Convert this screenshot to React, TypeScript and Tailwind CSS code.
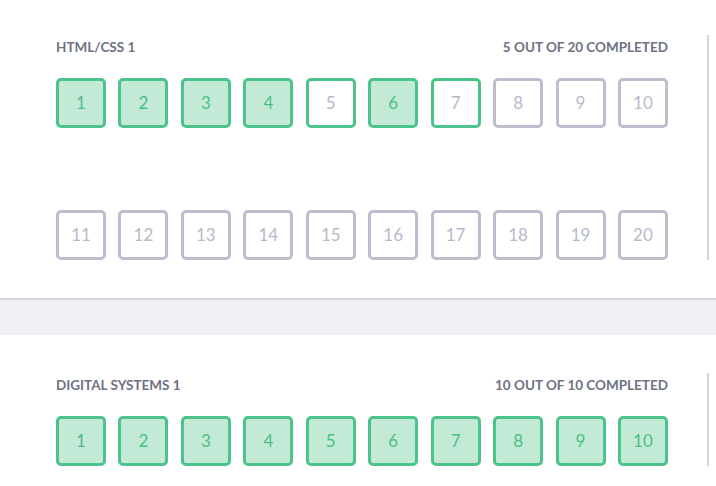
const COURSES = [
  { title: "HTML/CSS 1", total: 20, done: [1, 2, 3, 4, 6], started: [5, 7] },
  { title: "Digital Systems 1", total: 10, done: [1, 2, 3, 4, 5, 6, 7, 8, 9, 10], started: [] as number[] },
];

function Lesson({ n, state }: { n: number; state: "done" | "started" | "todo" }) {
  const cls =
    state === "done"
      ? "border-[#4cc38b] bg-[#c2ead6] text-[#4cbf88]"
      : state === "started"
        ? "border-[#4cc38b] bg-white text-[#b7bac9]"
        : "border-[#bcbecf] bg-white text-[#b7bac9]";
  return (
    <div className={`w-[50px] h-[50px] rounded-[5px] border-[3px] flex items-center justify-center text-[17px] ${cls}`}>
      {n}
    </div>
  );
}

function CourseCard({ course, className = "" }: { course: (typeof COURSES)[number]; className?: string }) {
  const rows: number[][] = [];
  for (let i = 1; i <= course.total; i += 10) {
    rows.push(Array.from({ length: 10 }, (_, k) => i + k));
  }
  return (
    <section className={`bg-white flex pt-[38px] pb-[38px] ${className}`}>
      <div className="w-[707px] pl-[56px] pr-[39px]">
        <div className="flex items-center justify-between h-[24px] text-[13.5px] font-bold uppercase text-[#6e7282]">
          <span>{course.title}</span>
          <span>
            {course.done.length} out of {course.total} completed
          </span>
        </div>
        <div className="mt-[19px] flex flex-col gap-[82px]">
          {rows.map((row, r) => (
            <div key={r} className="flex justify-between">
              {row.map((n) => (
                <Lesson
                  key={n}
                  n={n}
                  state={course.done.includes(n) ? "done" : course.started.includes(n) ? "started" : "todo"}
                />
              ))}
            </div>
          ))}
        </div>
      </div>
      <div className="border-l-2 border-[#d3d4dd] flex-1" />
    </section>
  );
}

export default function App() {
  return (
    <div className="min-h-screen bg-white overflow-hidden font-['Lato','Liberation_Sans',sans-serif]">
      <CourseCard course={COURSES[0]} className="-mt-[3px]" />
      <div className="h-[37px] bg-[#f0f1f6] border-t-2 border-[#d4d5e0]" />
      <CourseCard course={COURSES[1]} />
    </div>
  );
}
